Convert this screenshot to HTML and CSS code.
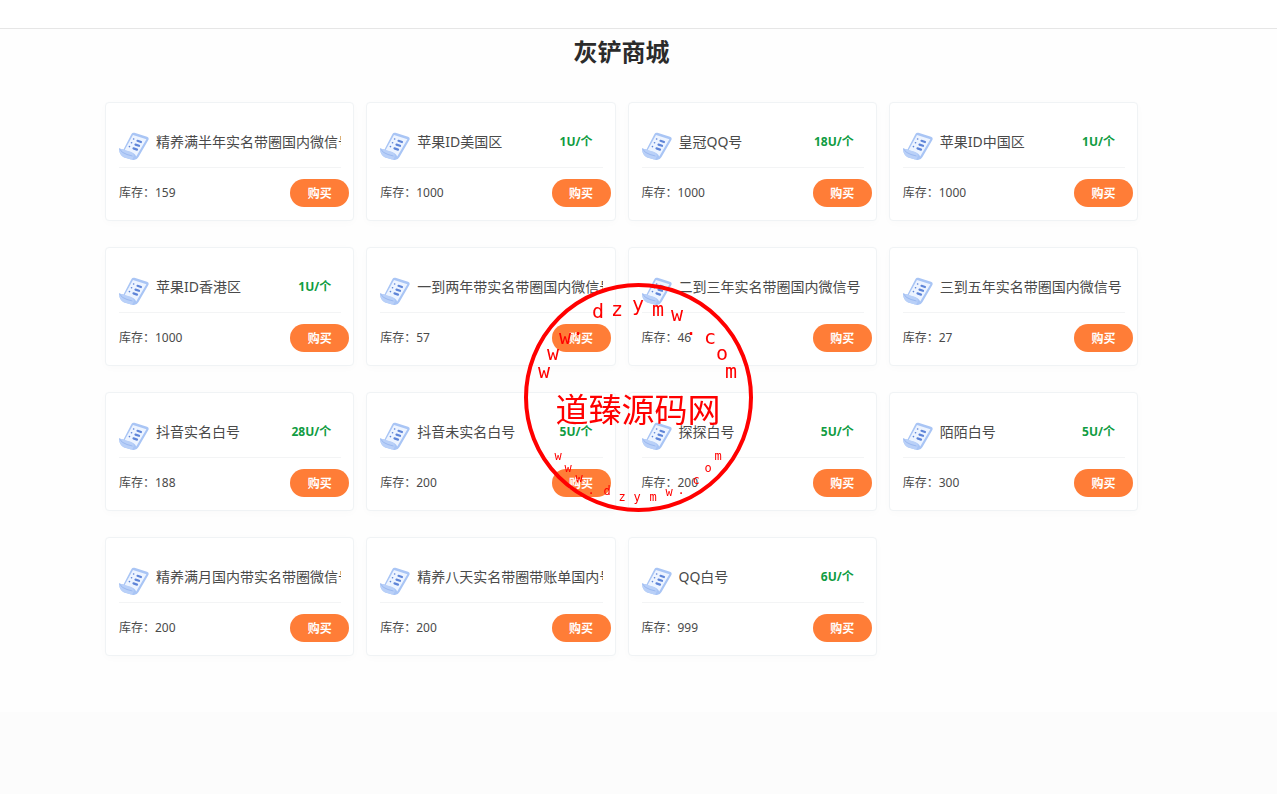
FILE: index.html
```
<!DOCTYPE html>
<html lang="zh-CN">
  <head>
    <meta charset="UTF-8" />
    <meta name="viewport" content="width=device-width, initial-scale=1.0" />
    <title>灰铲商城</title>
    <link rel="stylesheet" href="styles.css">
  </head>
  <body>
    <!-- 商品图标 -->
    <svg class="sprite" aria-hidden="true">
      <symbol id="icon-list" viewBox="0 0 30 30">
        <path d="M12.500 2 Q13.500 .2 15.500 .8 L28 4.800 Q30.600 5.800 29.200 8.200 L19.500 25 Q17.500 28.600 14 28 L5 25.500 Q-.2 23 .3 16.500 L4.500 17.500 Z" fill="#a9c5f5" />
        <path d="M14 3 L27.400 7.200 L17.200 24.600 Q16 21 11.500 20 L5.500 18.200 Z" fill="#edf4ff" />
        <path d="M.3 16.500 L11 19.500 Q15.500 21 14.500 25 Q14 27.500 12 27.400 L5 25.300 Q-.2 23 .3 16.500 Z" fill="#b9d0f8" />
        <path d="M.3 16.500 Q2.500 21 8 22.500 L13.500 24" fill="none" stroke="#9bb9f0" />
        <path d="M18.500 8.800 l3.500 1.200 M16.500 12.600 l3.500 1.200 M14.500 16.400 l3.500 1.200" stroke="#5f85d8" stroke-width="2.200" stroke-linecap="round" />
        <path d="M14.600 7 h.1 M12.500 10.800 h.1 M10.400 14.600 h.1" stroke="#5f85d8" stroke-width="1.600" stroke-linecap="round" />
      </symbol>
    </svg>

    <header class="topbar"></header>

    <main class="shop">
      <h1>灰铲商城</h1>

      <div class="goods">
        <div class="card">
          <div class="info">
            <svg class="icon"><use href="#icon-list" /></svg>
            <span class="name">精养满半年实名带圈国内微信号</span>
          </div>
          <div class="buy-row">
            <span class="stock">库存：159</span>
            <button type="button">购买</button>
          </div>
        </div>

        <div class="card">
          <div class="info">
            <svg class="icon"><use href="#icon-list" /></svg>
            <span class="name">苹果ID美国区</span>
            <span class="price">1U/个</span>
          </div>
          <div class="buy-row">
            <span class="stock">库存：1000</span>
            <button type="button">购买</button>
          </div>
        </div>

        <div class="card">
          <div class="info">
            <svg class="icon"><use href="#icon-list" /></svg>
            <span class="name">皇冠QQ号</span>
            <span class="price">18U/个</span>
          </div>
          <div class="buy-row">
            <span class="stock">库存：1000</span>
            <button type="button">购买</button>
          </div>
        </div>

        <div class="card">
          <div class="info">
            <svg class="icon"><use href="#icon-list" /></svg>
            <span class="name">苹果ID中国区</span>
            <span class="price">1U/个</span>
          </div>
          <div class="buy-row">
            <span class="stock">库存：1000</span>
            <button type="button">购买</button>
          </div>
        </div>

        <div class="card">
          <div class="info">
            <svg class="icon"><use href="#icon-list" /></svg>
            <span class="name">苹果ID香港区</span>
            <span class="price">1U/个</span>
          </div>
          <div class="buy-row">
            <span class="stock">库存：1000</span>
            <button type="button">购买</button>
          </div>
        </div>

        <div class="card">
          <div class="info">
            <svg class="icon"><use href="#icon-list" /></svg>
            <span class="name">一到两年带实名带圈国内微信号</span>
          </div>
          <div class="buy-row">
            <span class="stock">库存：57</span>
            <button type="button">购买</button>
          </div>
        </div>

        <div class="card">
          <div class="info">
            <svg class="icon"><use href="#icon-list" /></svg>
            <span class="name">二到三年实名带圈国内微信号</span>
          </div>
          <div class="buy-row">
            <span class="stock">库存：46</span>
            <button type="button">购买</button>
          </div>
        </div>

        <div class="card">
          <div class="info">
            <svg class="icon"><use href="#icon-list" /></svg>
            <span class="name">三到五年实名带圈国内微信号</span>
          </div>
          <div class="buy-row">
            <span class="stock">库存：27</span>
            <button type="button">购买</button>
          </div>
        </div>

        <div class="card">
          <div class="info">
            <svg class="icon"><use href="#icon-list" /></svg>
            <span class="name">抖音实名白号</span>
            <span class="price">28U/个</span>
          </div>
          <div class="buy-row">
            <span class="stock">库存：188</span>
            <button type="button">购买</button>
          </div>
        </div>

        <div class="card">
          <div class="info">
            <svg class="icon"><use href="#icon-list" /></svg>
            <span class="name">抖音未实名白号</span>
            <span class="price">5U/个</span>
          </div>
          <div class="buy-row">
            <span class="stock">库存：200</span>
            <button type="button">购买</button>
          </div>
        </div>

        <div class="card">
          <div class="info">
            <svg class="icon"><use href="#icon-list" /></svg>
            <span class="name">探探白号</span>
            <span class="price">5U/个</span>
          </div>
          <div class="buy-row">
            <span class="stock">库存：200</span>
            <button type="button">购买</button>
          </div>
        </div>

        <div class="card">
          <div class="info">
            <svg class="icon"><use href="#icon-list" /></svg>
            <span class="name">陌陌白号</span>
            <span class="price">5U/个</span>
          </div>
          <div class="buy-row">
            <span class="stock">库存：300</span>
            <button type="button">购买</button>
          </div>
        </div>

        <div class="card">
          <div class="info">
            <svg class="icon"><use href="#icon-list" /></svg>
            <span class="name">精养满月国内带实名带圈微信号</span>
          </div>
          <div class="buy-row">
            <span class="stock">库存：200</span>
            <button type="button">购买</button>
          </div>
        </div>

        <div class="card">
          <div class="info">
            <svg class="icon"><use href="#icon-list" /></svg>
            <span class="name">精养八天实名带圈带账单国内号</span>
          </div>
          <div class="buy-row">
            <span class="stock">库存：200</span>
            <button type="button">购买</button>
          </div>
        </div>

        <div class="card">
          <div class="info">
            <svg class="icon"><use href="#icon-list" /></svg>
            <span class="name">QQ白号</span>
            <span class="price">6U/个</span>
          </div>
          <div class="buy-row">
            <span class="stock">库存：999</span>
            <button type="button">购买</button>
          </div>
        </div>
      </div>
    </main>

    <footer class="footer"></footer>

    <!-- 水印 -->
    <svg class="watermark" viewBox="0 0 229 229">
      <circle cx="114.500" cy="114.500" r="112.500" />
      <text class="mark-name" x="114" y="139">道臻源码网</text>
      <g class="mark-top">
        <text x="20" y="95">w</text>
        <text x="29" y="77">w</text>
        <text x="41" y="61">w</text>
        <text x="54" y="52">.</text>
        <text x="74" y="35">d</text>
        <text x="93" y="33">z</text>
        <text x="114" y="28">y</text>
        <text x="134" y="33">m</text>
        <text x="153" y="38">w</text>
        <text x="167" y="52">.</text>
        <text x="186" y="61">c</text>
        <text x="198" y="77">o</text>
        <text x="207" y="95">m</text>
      </g>
      <g class="mark-bottom">
        <text x="34" y="177">w</text>
        <text x="44" y="189">w</text>
        <text x="55" y="199">w</text>
        <text x="67" y="211">.</text>
        <text x="83" y="212">d</text>
        <text x="98" y="218">z</text>
        <text x="113" y="218">y</text>
        <text x="129" y="218">m</text>
        <text x="145" y="213">w</text>
        <text x="157" y="211">.</text>
        <text x="172" y="201">c</text>
        <text x="184" y="189">o</text>
        <text x="194" y="177">m</text>
      </g>
    </svg>
  </body>
</html>
```
FILE: styles.css
```
* {
  margin: 0;
  padding: 0;
  box-sizing: border-box;
  font-family: "Noto Sans", "Noto Sans CJK SC", sans-serif;
}

body {
  display: flex;
  flex-direction: column;
  min-height: 100vh;
  background: #fefefe;
  color: #4a4a4a;
}

.sprite {
  display: none;
}

.topbar {
  height: 29px;
  background: #fff;
  border-bottom: 1px solid #e6e6e6;
}

.shop {
  padding: 5px 139px 56px 105px;
}

h1 {
  margin-bottom: 32px;
  font-size: 24px;
  line-height: 36px;
  text-align: center;
  color: #2b2b2b;
}

/* 商品列表 */
.goods {
  display: grid;
  grid-template-columns: repeat(4, 1fr);
  gap: 26px 12px;
}

.card {
  min-width: 0;
  padding: 29px 14px 13px 13px;
  background: #fff;
  border: 1px solid #f0f3f5;
  border-radius: 4px;
  box-shadow: 0 2px 8px rgba(0, 0, 0, 0.02);
}

.info {
  display: flex;
  align-items: flex-start;
  height: 36px;
  margin-right: -2px;
  overflow: hidden;
  white-space: nowrap;
  border-bottom: 1px solid #f3f4f5;
}

.icon {
  flex: none;
  width: 30px;
  height: 30px;
  margin-right: 7px;
}

.name {
  flex: none;
  font-size: 14px;
  line-height: 20px;
}

.price {
  margin-left: auto;
  margin-right: 10px;
  font-size: 12px;
  font-weight: bold;
  line-height: 20px;
  color: #109c42;
}

.buy-row {
  display: flex;
  justify-content: space-between;
  align-items: center;
  margin-top: 11px;
  margin-right: -10px;
}

.stock {
  font-size: 12px;
  line-height: 18px;
}

button {
  width: 59px;
  height: 28px;
  border: none;
  border-radius: 14px;
  background: #ff7d37;
  color: #fff;
  font-size: 12px;
  font-weight: bold;
  cursor: pointer;
}

button:hover {
  background: #f56f27;
}

.footer {
  flex: 1;
  background: #fcfcfc;
}

/* 水印 */
.watermark {
  position: fixed;
  inset: 0;
  width: 229px;
  height: 229px;
  margin: auto;
  pointer-events: none;
  fill: #f00;
  text-anchor: middle;
}

.watermark circle {
  fill: none;
  stroke: #f00;
  stroke-width: 4px;
}

.mark-name {
  font-size: 33px;
}

.mark-top text {
  font-family: "DejaVu Sans Mono", monospace;
  font-size: 20px;
}

.mark-bottom text {
  font-family: "DejaVu Sans Mono", monospace;
  font-size: 12px;
}

@media (max-width: 1000px) {
  .shop {
    padding-left: 20px;
    padding-right: 20px;
  }
  .goods {
    grid-template-columns: repeat(auto-fill, minmax(240px, 1fr));
  }
}
```
